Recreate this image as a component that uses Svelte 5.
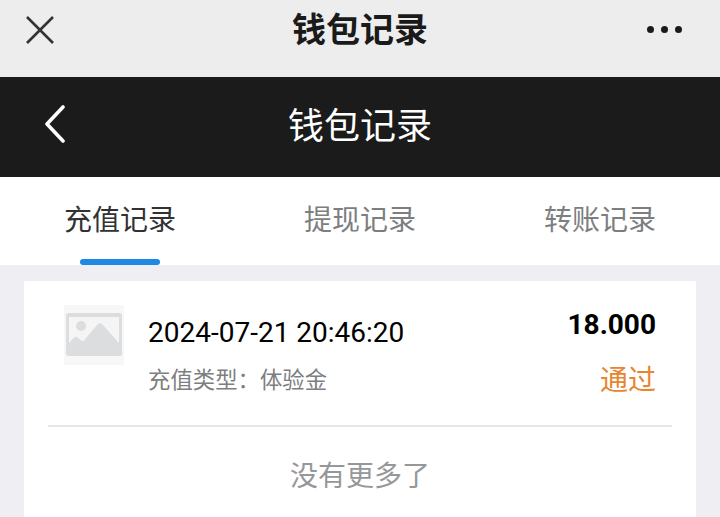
<script>
	const tabs = ['充值记录', '提现记录', '转账记录'];
	let active = 0;
</script>

<div class="page">
	<header class="wx-bar">
		<svg class="close" width="32" height="32" viewBox="0 0 32 32">
			<path d="M3 3 L29 29 M29 3 L3 29" stroke="#333" stroke-width="2.6" fill="none" />
		</svg>
		<h1>钱包记录</h1>
		<div class="dots"><i></i><i></i><i></i></div>
	</header>

	<nav class="title-bar">
		<svg class="back" width="24" height="38" viewBox="0 0 24 38">
			<path d="M20 2 L4 19 L20 36" stroke="#fff" stroke-width="3.6" fill="none" stroke-linecap="round" stroke-linejoin="round" />
		</svg>
		<h2>钱包记录</h2>
	</nav>

	<div class="tabs">
		{#each tabs as tab, i}
			<div class="tab" class:active={i === active}>{tab}</div>
		{/each}
	</div>

	<main>
		<section class="card">
			<div class="row">
				<svg class="thumb" width="60" height="60" viewBox="0 0 60 60">
					<rect width="60" height="60" fill="#f7f7f8" />
					<rect x="2" y="8" width="56" height="43" rx="2.5" fill="#dcdddf" />
					<path d="M5 12 H55 V38 L38 19 Q36 17.500 34 19 L19 36.500 L12.500 32 Q11.500 31.500 10.500 32 L5 38 Z" fill="#f5f5f6" />
					<circle cx="17" cy="21" r="5" fill="#dcdddf" />
				</svg>
				<div class="info">
					<div class="time">2024-07-21 20:46:20</div>
					<div class="type">充值类型：体验金</div>
				</div>
				<div class="side">
					<div class="amount">18.000</div>
					<div class="status">通过</div>
				</div>
			</div>
			<div class="more">没有更多了</div>
		</section>
	</main>
</div>

<style>
	:global(body) {
		margin: 0;
		background: #eeeef3;
	}

	.page {
		height: 517px;
		overflow: hidden;
		display: flex;
		flex-direction: column;
		font-family: Roboto, "Noto Sans CJK SC", sans-serif;
		background: #eeeef3;
	}

	.wx-bar {
		flex: none;
		height: 77px;
		background: #ededed;
		display: flex;
		align-items: center;
		justify-content: space-between;
		padding: 0 38px 0 24px;
		position: relative;
		box-sizing: border-box;
	}

	.close {
		margin-bottom: 17px;
	}

	.wx-bar h1 {
		position: absolute;
		left: 0;
		right: 0;
		top: 7px;
		margin: 0;
		text-align: center;
		font-size: 34px;
		line-height: 46px;
		font-weight: 700;
		color: #1a1a1a;
		pointer-events: none;
	}

	.dots {
		display: flex;
		gap: 7px;
		margin-bottom: 18px;
	}

	.dots i {
		width: 7px;
		height: 7px;
		border-radius: 50%;
		background: #1a1a1a;
	}

	.title-bar {
		flex: none;
		height: 100px;
		background: #1b1b1b;
		display: flex;
		justify-content: center;
		position: relative;
	}

	.back {
		position: absolute;
		left: 43px;
		top: 28px;
	}

	.title-bar h2 {
		margin: 0;
		font-size: 36px;
		line-height: 100px;
		font-weight: 400;
		color: #fff;
	}

	.tabs {
		flex: none;
		height: 88px;
		background: #fff;
		display: flex;
		justify-content: space-between;
		padding: 0 64px;
	}

	.tab {
		position: relative;
		font-size: 28px;
		line-height: 88px;
		color: #7d7e80;
	}

	.tab.active {
		color: #323233;
	}

	.tab.active::after {
		content: '';
		position: absolute;
		left: 16px;
		right: 16px;
		bottom: 0;
		height: 6px;
		border-radius: 3px;
		background: #1f88e5;
	}

	main {
		flex: 1;
		display: flex;
		flex-direction: column;
		padding: 16px 24px 0;
	}

	.card {
		flex: 1;
		background: #fff;
		padding: 0 24px;
	}

	.row {
		display: flex;
		height: 146px;
		padding: 24px 16px 0;
		box-sizing: border-box;
		border-bottom: 2px solid #e6e6e6;
	}

	.thumb {
		flex: none;
	}

	.info {
		flex: 1;
		margin-left: 24px;
	}

	.time {
		font-size: 28px;
		line-height: 32px;
		margin-top: 12px;
		color: #000;
	}

	.type {
		font-size: 22.4px;
		line-height: 30px;
		margin-top: 16px;
		color: #7d7e80;
	}

	.side {
		text-align: right;
	}

	.amount {
		font-size: 28px;
		line-height: 32px;
		margin-top: 4px;
		font-weight: 700;
		color: #000;
	}

	.status {
		font-size: 28px;
		line-height: 36px;
		margin-top: 22px;
		color: #e6862f;
	}

	.more {
		text-align: center;
		font-size: 28px;
		line-height: 40px;
		padding-top: 30px;
		color: #969799;
	}
</style>
